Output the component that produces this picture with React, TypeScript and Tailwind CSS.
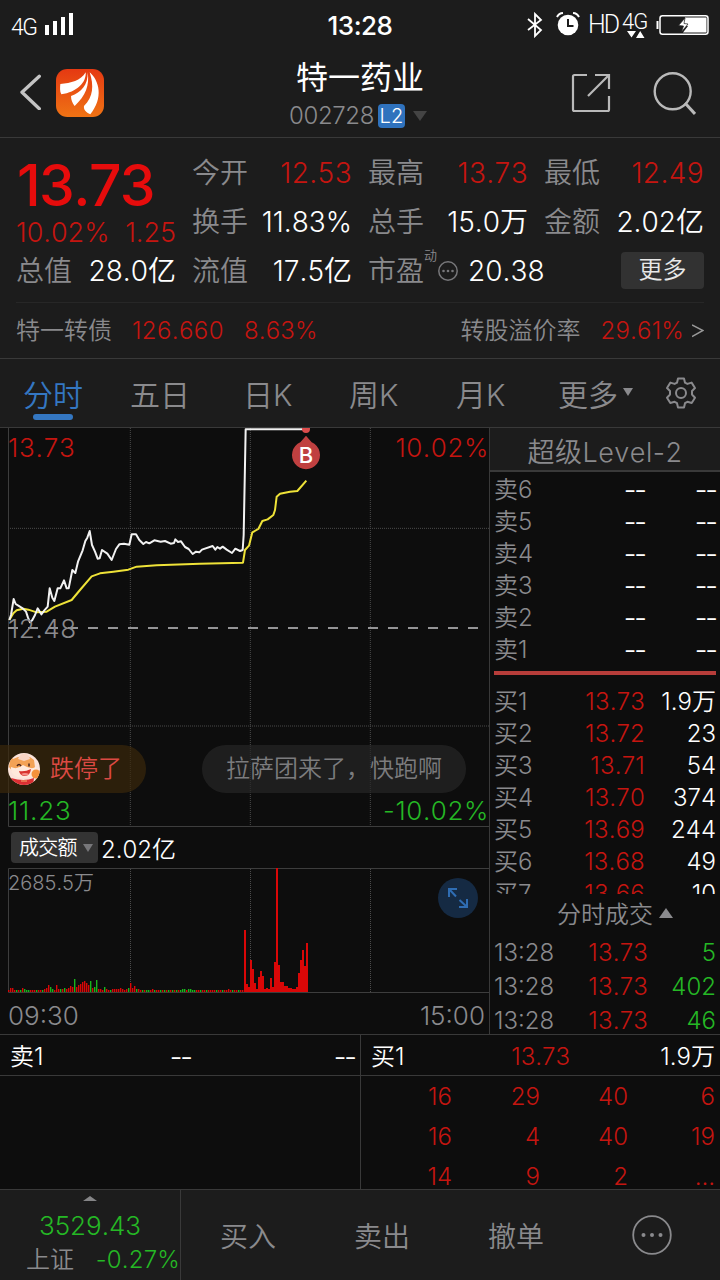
import React from 'react';

type Tone = 'r' | 'g';

const PRICE =
  '28,585 33,570 41,522 47,537 55,542 68,550 78,560 84,578 90,592 97,585 105,570 113,550 124,568 133,556 143,545 149,490 157,518 163,528 173,490 181,490 192,466 200,490 206,490 217,435 226,444 234,410 248,376 256,348 262,338 269,318 276,360 285,380 293,401 299,400 306,375 322,386 335,405 348,372 358,358 372,356 388,359 395,328 408,328 418,345 430,357 438,351 448,355 463,346 482,350 495,348 512,356 522,354 526,343 534,351 543,349 555,366 566,372 578,387 588,380 598,382 606,374 638,363 646,374 652,366 660,371 668,365 680,374 696,384 706,371 720,378 728,375 731,330 737,13 915,13';
const AVERAGE =
  '28,585 40,565 50,556 70,551 85,554 110,562 140,560 165,545 215,525 240,495 275,454 300,445 340,440 385,434 410,425 470,421 600,416 729,413 735,375 747,362 757,322 775,312 787,288 803,283 820,270 825,255 830,215 840,206 870,200 892,198 919,167';

const VOLUME_HEIGHTS = [
  2, 4, 4, 2, 2, 2, 2, 4, 3, 2, 2, 2, 2, 2, 2, 2, 2, 2, 3, 4, 7, 5, 3, 2, 7, 3, 3, 3, 4, 3, 4, 6, 5, 13, 5, 7, 8, 10, 11, 9,
  7, 11, 4, 5, 12, 3, 3, 2, 5, 3, 2, 2, 3, 3, 3, 3, 4, 3, 2, 3, 4, 9, 4, 6, 3, 3, 2, 2, 2, 2, 2, 2, 3, 2, 2, 2, 2, 2, 2, 2,
  2, 2, 2, 2, 2, 2, 2, 3, 3, 2, 3, 3, 2, 2, 2, 2, 2, 2, 2, 2, 2, 2, 2, 2, 2, 2, 2, 2, 2, 2, 3, 2, 2, 2, 2, 2, 2, 2,
  62, 8, 5, 32, 23, 9, 3, 15, 21, 16, 3, 4, 3, 14, 5, 30, 124, 27, 10, 10, 6, 6, 4, 4, 3, 3, 5, 19, 32, 42, 26, 49,
];
const DOWN_MINUTES = new Set([
  4, 6, 8, 9, 10, 14, 17, 21, 22, 26, 28, 33, 41, 43, 44, 48, 51, 60, 64, 67, 69, 70, 73, 76, 78, 80, 82, 84, 86, 87, 88, 90, 91, 92, 93, 96, 99, 104, 107, 112, 115,
]);

const GREY = 'text-[#8a8a8d]';
const RED = 'text-[#c51510]';
const GREEN = 'text-[#25b825]';

function Stat({ label, value, red }: { label: string; value: string; red?: boolean }) {
  return (
    <div className="flex items-center justify-between">
      <span className={GREY}>{label}</span>
      <span className={red ? 'tracking-[0.4px] ' + RED : 'text-white'}>{value}</span>
    </div>
  );
}

function Dashes() {
  return <span className="text-[28px] font-light tracking-[-2px] text-white">--</span>;
}

function StatusBar() {
  return (
    <div className="relative flex h-[50px] shrink-0 items-center text-white">
      <span className="ml-[11px] mt-1 w-[26px] font-[Roboto] text-[23px] tracking-[-1.5px]">4G</span>
      <svg className="ml-2 mb-0.5 h-[22px] w-7" viewBox="0 0 28 22" fill="#fff">
        <path d="M0 12h4v10H0zM8 8h4v14H8zM16 4h4v18h-4zM24 0h4v22h-4z" />
      </svg>
      <span className="absolute left-0 right-0 top-[13px] text-center text-[26px] font-[450] tracking-[-0.5px]">13:28</span>
      <div className="ml-auto flex h-full items-center">
        <svg className="mt-[-1px] h-[26px] w-[17px]" viewBox="0 0 17 26" fill="none" stroke="#fff" strokeWidth="1.8">
          <path d="M1 7l13 11-6 6V2l6 6L1 18" />
        </svg>
        <svg className="ml-3 mt-[-2px] h-6 w-6" viewBox="0 0 24 24">
          <circle cx="12" cy="13" r="10.3" fill="#fff" />
          <path d="M1 5a7 7 0 0 1 6-4M17 1a7 7 0 0 1 6 4" stroke="#fff" strokeWidth="2" fill="none" />
          <path d="M12 7v7h5.5" stroke="#1c1c1c" strokeWidth="2" fill="none" />
        </svg>
        <span className="ml-2 mt-[-2px] w-[30px] font-[Roboto] text-[25px] tracking-[-2px]">HD</span>
        <div className="ml-1 mt-[1px] flex w-7 flex-col items-center">
          <span className="w-7 font-[Roboto] text-[22px] leading-[18px] tracking-[-1px]">4G</span>
          <svg className="h-[7px] w-[18px]" viewBox="0 0 18 7" fill="#fff">
            <path d="M0 0h9L4.500 6.500zM9 7h8.500L13.200 0z" />
          </svg>
        </div>
        <svg className="ml-1.5 mr-[11px] mt-[-1px] h-5 w-[53px]" viewBox="0 0 53 20">
          <rect x="4" y=".8" width="48" height="18.400" rx="2.500" fill="none" stroke="#fff" strokeWidth="1.500" />
          <path d="M1.500 6v8" stroke="#fff" strokeWidth="2" />
          <path d="M29 2.500h21.500v15H27l5-6.500-5-1z" fill="#fff" />
          <path d="M29 3l-6.500 7.500 5 .5-2 6L32 9l-4-.5z" fill="#fff" stroke="#1c1c1c" strokeWidth=".7" />
        </svg>
      </div>
    </div>
  );
}

function Header() {
  return (
    <header className="grid h-[88px] shrink-0 grid-cols-[1fr_auto_1fr] border-b border-[#393939]">
      <div className="flex items-start pt-[19px]">
        <svg className="ml-5 mt-[5px] h-9 w-[21px]" viewBox="60 222 63 108" fill="none">
          <path d="M118 229L66 277l52 49" stroke="#c4c4c4" strokeWidth="10" strokeLinecap="round" strokeLinejoin="round" />
        </svg>
        <svg className="ml-[15px] h-12 w-12" viewBox="0 0 144 144">
          <defs>
            <linearGradient id="logo" x1="0" y1="0" x2="0" y2="1">
              <stop offset="0" stopColor="#e53912" />
              <stop offset="1" stopColor="#ef7314" />
            </linearGradient>
          </defs>
          <rect width="144" height="144" rx="34" fill="url(#logo)" />
          <g fill="#fff">
            <path d="M13 45C45 42 74 36 89 10 92 40 62 70 16 76 11 68 12 54 13 45z" />
            <path d="M95 10c6 40-6 70-39 101-7-9-11-19-11-30C76 70 96 49 95 10z" />
            <path d="M101 10c29 25 42 77 2 126-13-6-21-14-19-25C112 84 114 50 101 10z" />
          </g>
        </svg>
      </div>
      <div className="flex flex-col items-center">
        <h1 className="mt-3 text-[32px] font-normal leading-8 text-white">特一药业</h1>
        <div className="mt-2.5 flex items-center pr-1">
          <span className={'text-[24px] tracking-[-0.4px] ' + GREY}>002728</span>
          <span className="ml-1 flex h-6 w-[27px] items-center justify-center rounded bg-[#2f72bd] text-[20px] text-white">L2</span>
          <svg className="ml-2 h-2.5 w-3.5" viewBox="0 0 14 10" fill="#444">
            <path d="M0 0h14L7 10z" />
          </svg>
        </div>
      </div>
      <div className="flex items-start justify-end pr-6 pt-[22px]">
        <svg className="mr-[42px] mt-[1px] h-10 w-10" viewBox="0 0 40 40" fill="none" stroke="#b9b9b9" strokeWidth="2.200">
          <path d="M16 2H3.500Q2 2 2 3.500v33Q2 38 3.500 38h33q1.500 0 1.500-1.500V23M24 2h14v14M38 2L17 23" />
        </svg>
        <svg className="h-[43px] w-[43px]" viewBox="0 0 43 43" fill="none" stroke="#b9b9b9" strokeWidth="2.400">
          <circle cx="19.700" cy="19.300" r="18" />
          <path d="M32 31l10 11" strokeWidth="3" />
        </svg>
      </div>
    </header>
  );
}

function Quote() {
  return (
    <section className="flex h-[221px] shrink-0 flex-col border-b border-[#393939] px-4 pt-2.5">
      <div className="grid h-[155px] shrink-0 grid-cols-4 grid-rows-[49px_49px_49px] gap-x-4 border-b border-[#272727] text-[28px]">
        <div className="row-span-2 flex flex-col whitespace-nowrap">
          <div className="ml-px mt-[9px] text-[57px] font-medium leading-[58px] tracking-[-1.6px] text-[#e60c0c]">13.73</div>
          <div className={'mt-[4px] flex justify-between text-[27px] ' + RED}>
            <span>10.02%</span>
            <span>1.25</span>
          </div>
        </div>
        <Stat label="今开" value="12.53" red />
        <Stat label="最高" value="13.73" red />
        <Stat label="最低" value="12.49" red />
        <Stat label="换手" value="11.83%" />
        <Stat label="总手" value="15.0万" />
        <Stat label="金额" value="2.02亿" />
        <Stat label="总值" value="28.0亿" />
        <Stat label="流值" value="17.5亿" />
        <div className="flex items-center whitespace-nowrap">
          <span className={GREY}>市盈</span>
          <span className={'mb-[30px] w-[14px] text-[13px] ' + GREY}>动</span>
          <svg className="ml-[1px] h-5 w-5 shrink-0" viewBox="0 0 20 20" fill="#77777a">
            <circle cx="10" cy="10" r="9.200" fill="none" stroke="#77777a" strokeWidth="1.500" />
            <circle cx="5.500" cy="10" r="1.300" />
            <circle cx="10" cy="10" r="1.300" />
            <circle cx="14.500" cy="10" r="1.300" />
          </svg>
          <span className="ml-2.5 text-white">20.38</span>
        </div>
        <div className="flex items-center justify-end">
          <button className="h-[37px] w-[83px] rounded bg-[#323232] pb-0.5 text-[24px] leading-none text-[#e8e8e8]">更多</button>
        </div>
      </div>
      <div className={'flex flex-1 items-center whitespace-nowrap text-[24px] ' + GREY}>
        <span>特一转债</span>
        <span className={'ml-5 tracking-[0.4px] ' + RED}>126.660</span>
        <span className={'ml-5 tracking-[0.2px] ' + RED}>8.63%</span>
        <span className="ml-auto">转股溢价率</span>
        <span className={'ml-5 tracking-[0.2px] ' + RED}>29.61%</span>
        <svg className="ml-2 h-[14px] w-3" viewBox="0 0 12 14" fill="none" stroke="#999" strokeWidth="1.500">
          <path d="M0 1l11 5.500L0 12.500" />
        </svg>
      </div>
    </section>
  );
}

function Tabs() {
  return (
    <nav className={'flex h-[69px] shrink-0 items-center border-b border-[#393939] pt-[3px] text-[30px] ' + GREY}>
      <div className="relative ml-[23px] w-[107px] text-[#3477c2]">
        分时
        <span className="absolute left-2.5 top-[34px] h-1.5 w-10 rounded-full bg-[#3477c2]" />
      </div>
      <span className="w-[113px]">五日</span>
      <span className="w-[106px]">日K</span>
      <span className="w-[107px]">周K</span>
      <span className="w-[102px]">月K</span>
      <span>更多</span>
      <svg className="ml-[5px] mb-1.5 h-2 w-2.5" viewBox="0 0 10 8" fill="#8a8a8d">
        <path d="M0 0h10L5 8z" />
      </svg>
      <svg className="ml-8 mb-1 h-8 w-8" viewBox="0 0 32 32" fill="none" stroke="#8a8a8d" strokeWidth="2" strokeLinejoin="round">
        <path d="M13 1.500h6l1 4.200 2.400 1.200 4.200-1.300 3.400 5.400-3 3v3.500l3 3.200-3.300 5.300-4.300-1.200L20 26.200l-1 4.300h-6l-1-4.300-2.400-1.400-4.300 1.200L2 20.700l3-3.200V14l-3-3 3.400-5.400 4.200 1.300L12 5.700z" />
        <circle cx="16" cy="16" r="5" />
      </svg>
    </nav>
  );
}

function Mascot() {
  return (
    <svg className="h-8 w-8 shrink-0" viewBox="0 0 32 32">
      <defs>
        <clipPath id="face"><circle cx="16" cy="16" r="16" /></clipPath>
      </defs>
      <g clipPath="url(#face)">
        <rect width="32" height="32" fill="#fbe3da" />
        <path d="M3 2l2 4 5-2q6-1 12 0l4 3 1 7-3 5H5l-4-5z" fill="#f3a256" />
        <path d="M10 6c2-7 11-7 12 0l-6 2z" fill="#f9d5c5" />
        <path d="M3 14q6 3 12-2 8 5 13 2 2 10-12 11Q2 24 3 14z" fill="#ffe9dc" />
        <circle cx="28" cy="21" r="4.500" fill="#f5923c" />
        <path d="M9 13q2-3 4 0M21 10.500v3" stroke="#4a241b" strokeWidth="1.500" fill="none" />
        <path d="M11 18q6 1 12-2-1 7-6 7-5 0-6-5z" fill="#d8342e" />
        <path d="M13 21q4-2 8 0-3 3-8 0z" fill="#f59088" />
        <path d="M3 25q13 4 23 0l-1 8H5z" fill="#dc2f33" />
        <path d="M13 28h6" stroke="#f6b06b" />
      </g>
    </svg>
  );
}

function PriceChart() {
  return (
    <div className="relative h-[399px]">
      <svg className="block h-[399px] w-[489px]" viewBox="0 9 1467 1197" fill="none">
        <path d="M391 9V1203M751 9V1203M1111 9V1203M30 310H1467M30 903H1467" stroke="#4b4b4b" strokeWidth="3" strokeDasharray="3 3" />
        <path d="M25.500 9V1204.500H1467" stroke="#3d3d3d" strokeWidth="3" />
        <path d="M24 609H1440" stroke="#949496" strokeWidth="6" strokeDasharray="30 30" />
        <polyline points={AVERAGE} stroke="#eee238" strokeWidth="6" strokeLinejoin="round" />
        <polyline points={PRICE} stroke="#f2f2f2" strokeWidth="6" strokeLinejoin="round" />
        <circle cx="918" cy="12" r="12" fill="#dc4c4c" />
        <path d="M918 32l17 20a42 42 0 1 1-34 0z" fill="#c04040" />
      </svg>
      <span className="absolute left-[297px] top-[16px] w-[18px] text-center text-[22px] font-medium text-white">B</span>
      <span className={'absolute left-[8px] top-[7px] text-[26px] tracking-[0.8px] ' + RED}>13.73</span>
      <span className={'absolute right-0 top-[7px] text-[26px] tracking-[0.6px] ' + RED}>10.02%</span>
      <span className={'absolute left-[8px] top-[188px] text-[26px] tracking-[0.6px] ' + GREY}>12.48</span>
      <span className={'absolute left-[8px] top-[370px] text-[26px] tracking-[0.8px] ' + GREEN}>11.23</span>
      <span className={'absolute right-0 top-[370px] text-[26px] tracking-[0.6px] ' + GREEN}>-10.02%</span>
      <div className="absolute left-0 top-[317px] flex h-12 w-[146px] items-center rounded-l-[20px] rounded-r-full bg-[#3b280c]/70 pl-2 text-[24px] text-[#dc4a43]">
        <Mascot />
        <span className="ml-2.5">跌停了</span>
      </div>
      <div className="absolute left-[202px] top-[317px] flex h-12 w-[264px] items-center justify-center rounded-full bg-[#262626]/70 text-[24px] text-[#7c7c7e]">
        拉萨团来了，快跑啊
      </div>
    </div>
  );
}

function VolumeChart() {
  return (
    <div className="relative h-[125px]">
      <svg className="block h-[125px] w-[489px]" viewBox="0 0 489 125" fill="none">
        <path d="M130.500 1V124M250.500 1V124M370.500 1V124" stroke="#4b4b4b" strokeDasharray="1 1" />
        <path d="M489 .5H8.500V124.500H489" stroke="#3d3d3d" />
        {VOLUME_HEIGHTS.map((h, i) => {
          const tone: Tone = DOWN_MINUTES.has(i) ? 'g' : 'r';
          return (
            <g key={i}>
              <rect x={8 + 2 * i} y={124 - h} width="2" height={h} fill={tone === 'g' ? '#18b51c' : '#d90707'} />
              {i < 118 && <rect x={9.400 + 2 * i} y={124 - h} width=".6" height={h} fill="#0d0d0d" />}
            </g>
          );
        })}
      </svg>
      <span className={'absolute left-[8px] top-[5px] text-[20px] ' + GREY}>2685.5万</span>
      <svg className="absolute left-[438px] top-[10px] h-10 w-10" viewBox="0 0 40 40" fill="none" stroke="#2f6db3" strokeWidth="2">
        <circle cx="20" cy="20" r="20" fill="#152a43" stroke="none" />
        <path d="M11 19v-8h8M11.500 11.500l6.500 7M29 21v8h-8M28.500 28.500l-7-6.500" />
      </svg>
    </div>
  );
}

function BookRow({ name, price, qty }: { name: string; price?: string; qty?: string }) {
  return (
    <div className="flex h-8 shrink-0 items-center">
      <span className={'w-[50px] ' + GREY}>{name}</span>
      <span className={'w-[101px] text-right tracking-[0.2px] ' + RED}>{price ?? <Dashes />}</span>
      <span className="flex-1 text-right text-white">{qty ?? <Dashes />}</span>
    </div>
  );
}

const BIDS = [
  ['13.73', '1.9万'],
  ['13.72', '23'],
  ['13.71', '54'],
  ['13.70', '374'],
  ['13.69', '244'],
  ['13.68', '49'],
  ['13.66', '10'],
];

function OrderBook() {
  return (
    <aside className="flex w-[231px] flex-col border-l border-[#393939] text-[24px]">
      <div className={'flex h-11 shrink-0 items-center justify-center border-b-2 border-[#393939] bg-[#1c1c1c] pt-[7px] text-[27px] tracking-[0.5px] ' + GREY}>超级Level-2</div>
      <div className="flex h-[422px] shrink-0 flex-col overflow-hidden pl-1 pr-1 pt-0.5">
        {[6, 5, 4, 3, 2, 1].map((n) => (
          <BookRow key={n} name={'卖' + n} />
        ))}
        <div className="mb-[11px] mt-[5px] h-1 shrink-0 bg-[#b73d3a]" />
        {BIDS.map(([price, qty], i) => (
          <BookRow key={price} name={'买' + (i + 1)} price={price} qty={qty} />
        ))}
      </div>
      <div className={'flex h-[42px] shrink-0 items-center justify-center pl-5 ' + GREY}>
        分时成交
        <svg className="mb-1 ml-1.5 h-2.5 w-3.5" viewBox="0 0 14 10" fill="#8a8a8d">
          <path d="M0 10h14L7 0z" />
        </svg>
      </div>
      {['5', '402', '46'].map((qty) => (
        <div key={qty} className="flex h-[34px] shrink-0 items-center pl-1 pr-1">
          <span className={'w-[70px] ' + GREY}>13:28</span>
          <span className={'w-[84px] text-right tracking-[0.2px] ' + RED}>13.73</span>
          <span className={'flex-1 text-right ' + GREEN}>{qty}</span>
        </div>
      ))}
    </aside>
  );
}

const QUEUE = ['16', '29', '40', '6', '16', '4', '40', '19', '14', '9', '2', '...'];

function Queue() {
  return (
    <section className="grid h-[154px] shrink-0 grid-cols-[360px_360px] overflow-hidden bg-[#0d0d0d] text-[24px]">
      <div>
        <div className="flex h-[41px] items-center border-b border-[#393939] pl-[10px] pr-[5px] pt-[3px] text-white">
          <span className="w-[90px]">卖1</span>
          <span className="w-[91px] text-right"><Dashes /></span>
          <span className="flex-1 text-right"><Dashes /></span>
        </div>
      </div>
      <div className="border-l border-[#393939]">
        <div className="flex h-[41px] items-center border-b border-[#393939] pl-[10px] pr-[5px] pt-[3px] text-white">
          <span className="w-[90px]">买1</span>
          <span className={'w-[109px] text-right ' + RED}>13.73</span>
          <span className="flex-1 text-right">1.9万</span>
        </div>
        <div className={'grid auto-rows-[40px] grid-cols-[91px_88px_88px_87px] items-center pt-px text-right ' + RED}>
          {QUEUE.map((n, i) => (
            <span key={i}>{n}</span>
          ))}
        </div>
      </div>
    </section>
  );
}

function BottomBar() {
  return (
    <footer className={'flex h-[91px] shrink-0 border-t border-[#393939] text-[28px] ' + GREY}>
      <div className="flex w-[181px] flex-col items-center border-r border-[#393939]">
        <svg className="mt-1.5 h-[5px] w-[14px] shrink-0" viewBox="0 0 14 5" fill="#858587">
          <path d="M0 5h14L7 0z" />
        </svg>
        <span className={'mt-3 text-[26px] ' + GREEN}>3529.43</span>
        <div className="mt-[9px] flex w-full items-center justify-between whitespace-nowrap pl-[26px] text-[24px]">
          <span>上证</span>
          <span className={'tracking-[0.2px] ' + GREEN}>-0.27%</span>
        </div>
      </div>
      {['买入', '卖出', '撤单'].map((label) => (
        <span key={label} className="flex w-[134px] items-center justify-center pt-1">{label}</span>
      ))}
      <div className="flex w-[137px] items-center justify-center">
        <svg className="h-10 w-10" viewBox="0 0 40 40" fill="#8a8a8d">
          <circle cx="20" cy="20" r="18.800" fill="none" stroke="#8a8a8d" strokeWidth="1.800" />
          <circle cx="11.500" cy="20" r="2" />
          <circle cx="20" cy="20" r="2" />
          <circle cx="28.500" cy="20" r="2" />
        </svg>
      </div>
    </footer>
  );
}

export default function App() {
  return (
    <div className="flex h-[1280px] w-[720px] flex-col overflow-hidden bg-[#1c1c1c] font-[Inter,'Noto_Sans_CJK_SC',sans-serif] font-[350] leading-none [font-kerning:none]">
      <StatusBar />
      <Header />
      <Quote />
      <Tabs />
      <main className="flex h-[607px] shrink-0 border-b border-[#393939] bg-[#0d0d0d]">
        <div className="w-[489px]">
          <PriceChart />
          <div className="flex h-[41px] items-center">
            <div className="ml-[11px] flex h-[31px] w-[87px] items-center rounded bg-[#333] pl-2 text-[20px] tracking-[-0.8px] text-white">
              成交额
              <svg className="ml-1.5 h-2 w-2.5" viewBox="0 0 10 8" fill="#77777a">
                <path d="M0 0h10L5 8z" />
              </svg>
            </div>
            <span className="ml-[3px] pt-1 text-[24px] text-white">2.02亿</span>
          </div>
          <VolumeChart />
          <div className={'flex h-[41px] items-center justify-between pl-[8px] pr-1 pt-1 text-[26px] ' + GREY}>
            <span>09:30</span>
            <span>15:00</span>
          </div>
        </div>
        <OrderBook />
      </main>
      <Queue />
      <BottomBar />
    </div>
  );
}
